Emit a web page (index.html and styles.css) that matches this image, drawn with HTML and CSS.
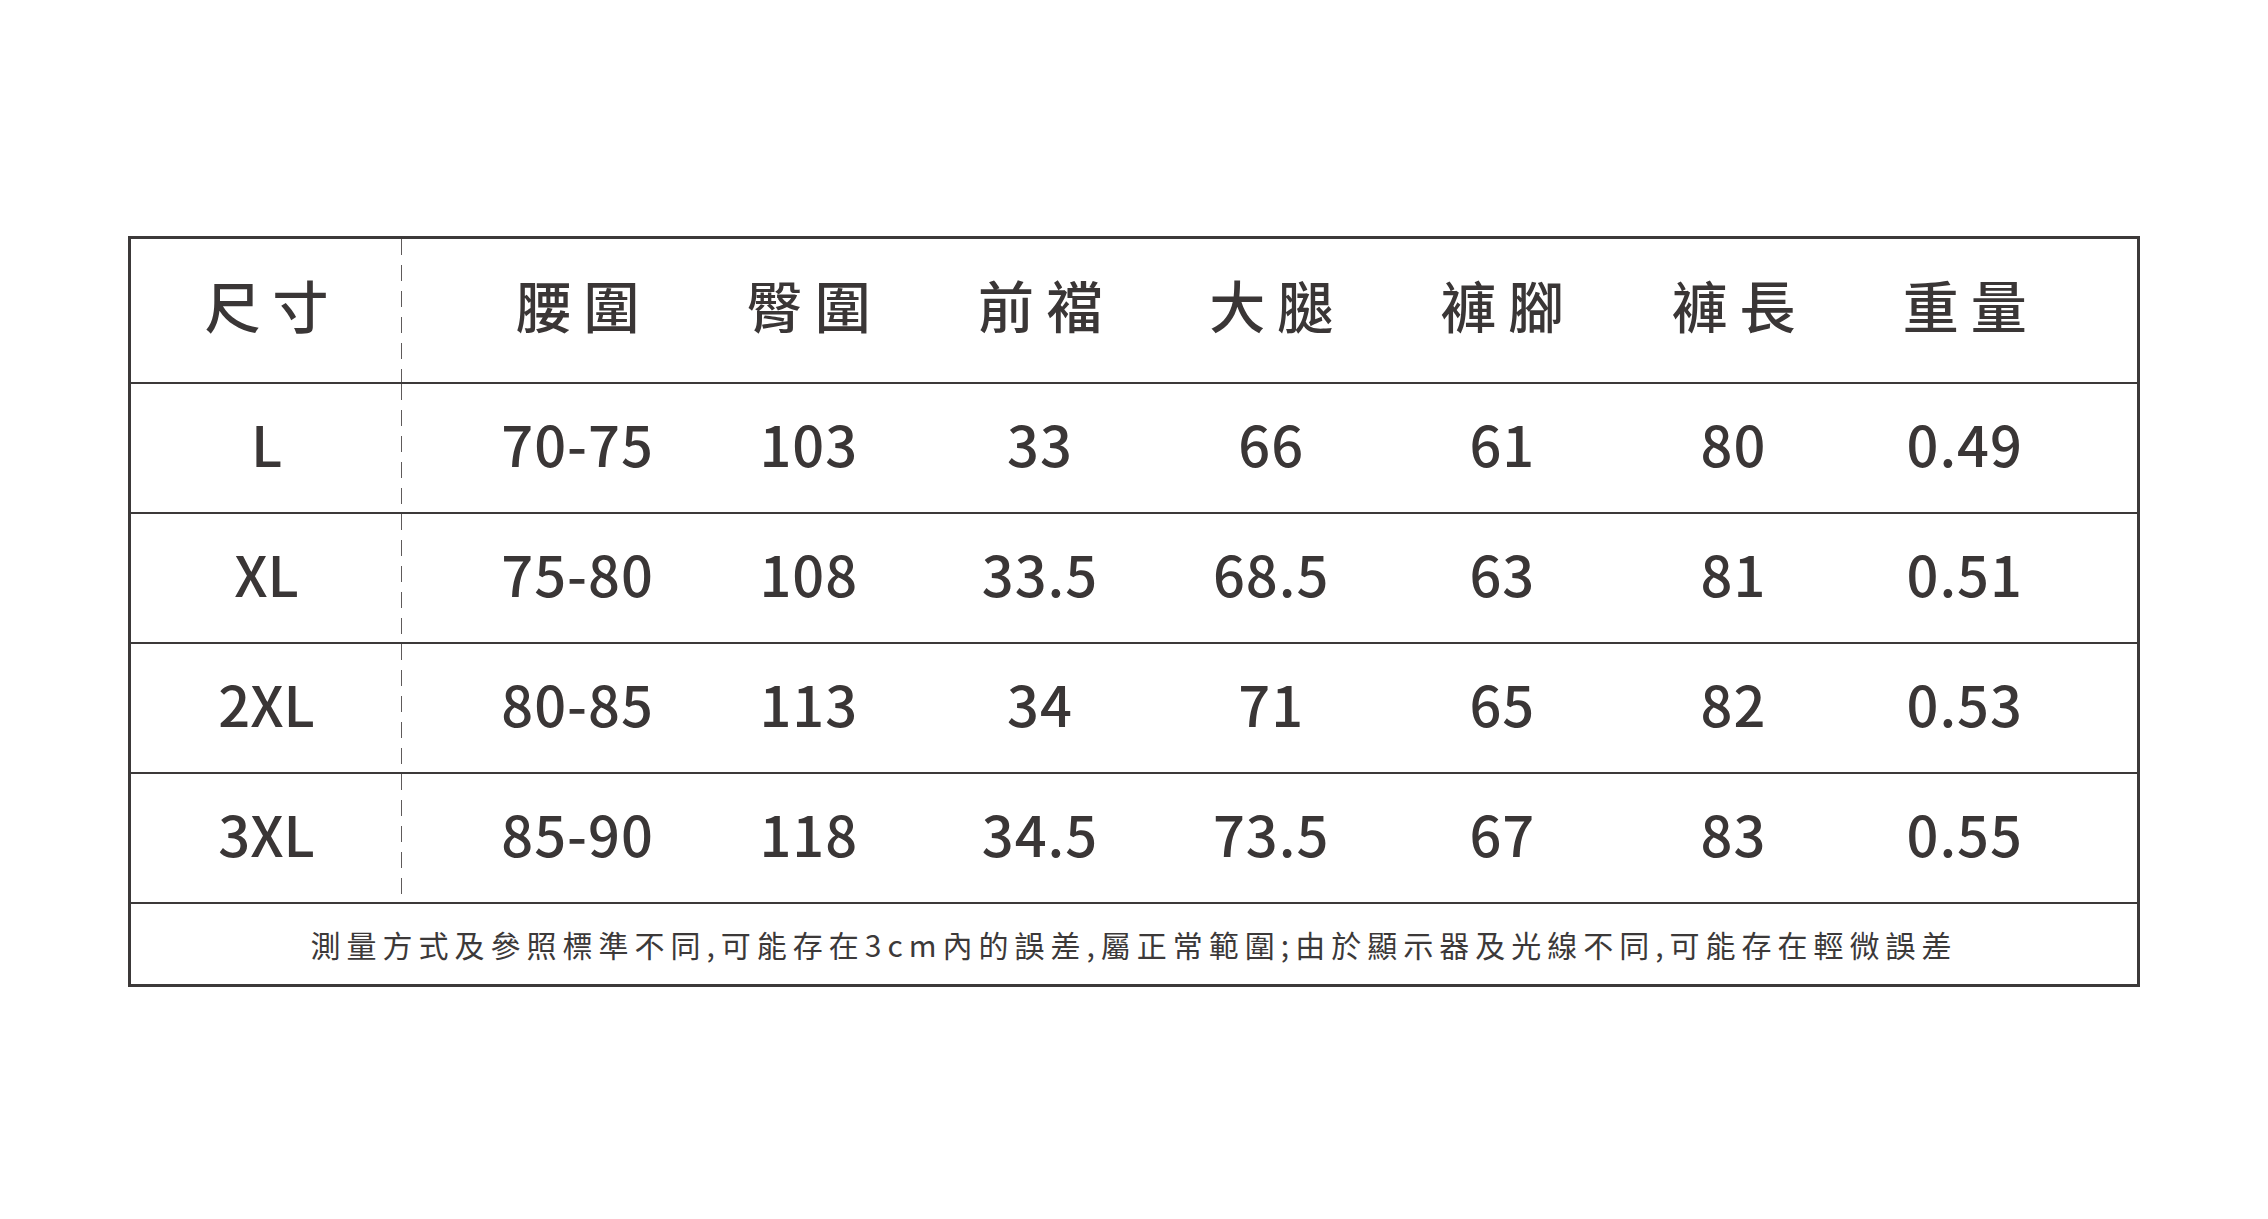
FILE: index.html
```html
<!DOCTYPE html>
<html lang="zh-Hant">
<head>
<meta charset="utf-8">
<title>尺寸表</title>
<link rel="stylesheet" href="styles.css">
</head>
<body>
<div class="sheet">
  <div class="row head">
    <div class="label"><span class="hd">尺寸</span></div>
    <div class="vals">
      <div class="v"><span class="hd">腰圍</span></div>
      <div class="v"><span class="hd">臀圍</span></div>
      <div class="v"><span class="hd">前襠</span></div>
      <div class="v"><span class="hd">大腿</span></div>
      <div class="v"><span class="hd">褲腳</span></div>
      <div class="v"><span class="hd">褲長</span></div>
      <div class="v"><span class="hd">重量</span></div>
    </div>
  </div>
  <div class="row">
    <div class="label">L</div>
    <div class="vals">
      <div class="v">70-75</div><div class="v">103</div><div class="v">33</div><div class="v">66</div><div class="v">61</div><div class="v">80</div><div class="v">0.49</div>
    </div>
  </div>
  <div class="row">
    <div class="label">XL</div>
    <div class="vals">
      <div class="v">75-80</div><div class="v">108</div><div class="v">33.5</div><div class="v">68.5</div><div class="v">63</div><div class="v">81</div><div class="v">0.51</div>
    </div>
  </div>
  <div class="row">
    <div class="label">2XL</div>
    <div class="vals">
      <div class="v">80-85</div><div class="v">113</div><div class="v">34</div><div class="v">71</div><div class="v">65</div><div class="v">82</div><div class="v">0.53</div>
    </div>
  </div>
  <div class="row">
    <div class="label">3XL</div>
    <div class="vals">
      <div class="v">85-90</div><div class="v">118</div><div class="v">34.5</div><div class="v">73.5</div><div class="v">67</div><div class="v">83</div><div class="v">0.55</div>
    </div>
  </div>
  <div class="foot">測量方式及參照標準不同,可能存在3cm內的誤差,屬正常範圍;由於顯示器及光線不同,可能存在輕微誤差</div>
</div>
</body>
</html>
```

FILE: styles.css
```css
html, body {
  margin: 0;
  padding: 0;
  background: #ffffff;
}

body {
  padding-top: 236px;
  font-family: "Noto Sans CJK TC", "Noto Sans", sans-serif;
  color: #3a3636;
}

.sheet {
  width: 2012px;
  margin: 0 auto;
  box-sizing: border-box;
  border: 3px solid #3c3939;
}

.row {
  display: flex;
  height: 130px;
  box-sizing: border-box;
  border-bottom: 2px solid #3c3939;
  font-size: 56px;
  font-weight: 500;
}

.row.head {
  height: 145px;
}

.label {
  width: 271px;
  flex: none;
  display: flex;
  align-items: center;
  justify-content: center;
  padding-bottom: 12px;
  box-sizing: border-box;
  background-image: repeating-linear-gradient(to bottom, #5e5a5a 0 16px, transparent 16px 26px);
  background-size: 1.5px 100%;
  background-repeat: no-repeat;
  background-position: right top;
}

.vals {
  display: grid;
  grid-template-columns: repeat(7, 231.2px);
  padding-left: 60px;
}

.v {
  display: flex;
  align-items: center;
  justify-content: center;
  padding-bottom: 12px;
  letter-spacing: 1px;
}

.head .label,
.head .v {
  padding-bottom: 14px;
}

.hd {
  font-size: 56px;
  font-weight: 500;
  letter-spacing: 12px;
  margin-right: -12px;
}

.foot {
  height: 80px;
  display: flex;
  align-items: center;
  justify-content: center;
  font-size: 30px;
  letter-spacing: 6px;
  color: #3c3939;
}
```
